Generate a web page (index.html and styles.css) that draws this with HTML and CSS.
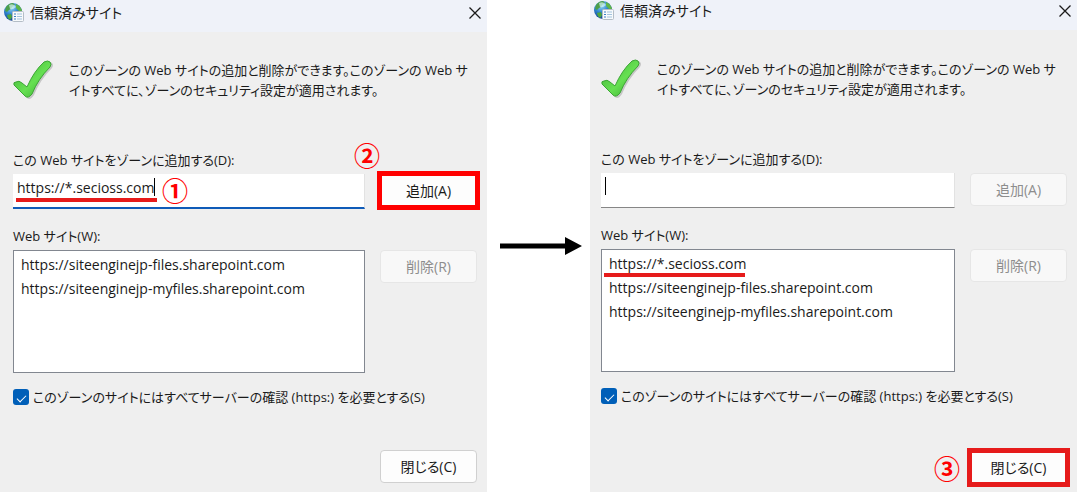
FILE: index.html
```
<!DOCTYPE html>
<html lang="ja">
<head>
    <meta charset="UTF-8">
    <meta name="viewport" content="width=device-width, initial-scale=1.0">
    <title>信頼済みサイト</title>
    <link rel="stylesheet" href="styles.css">
</head>
<body>
    <svg width="0" height="0" class="defs" aria-hidden="true">
        <defs>
            <radialGradient id="sea" cx="40%" cy="25%" r="75%">
                <stop offset="0" stop-color="#9fdcf7"/>
                <stop offset="0.5" stop-color="#2f86cf"/>
                <stop offset="1" stop-color="#123f92"/>
            </radialGradient>
            <linearGradient id="leaf" x1="0" y1="0" x2="1" y2="1">
                <stop offset="0" stop-color="#3fae35"/>
                <stop offset="0.55" stop-color="#66e052"/>
                <stop offset="1" stop-color="#35a52c"/>
            </linearGradient>
            <symbol id="globe" viewBox="0 0 20 20">
                <circle cx="9" cy="9" r="9" fill="url(#sea)"/>
                <path d="M2 4 Q5 0 9 0 L11 2 L8 4 L7 6 L5 7 L3 9 L1 8 Z" fill="#4d9f4a"/>
                <path d="M12 1 Q17 3 18 8 L15 8 L12 5 Z" fill="#5fb548"/>
                <path d="M3 12 L7 11 L8 14 L6 17 Q3 15 3 12 Z" fill="#4fa63d"/>
                <path d="M5 2 Q10 0 12 4 Q9 7 6 6 Z" fill="#d4f3f5" opacity="0.7"/>
                <rect x="8.500" y="8.500" width="11" height="10" rx="1" fill="#f7fafc" stroke="#b4bdc6"/>
                <path d="M10 11h2M10 13.500h2M10 16h2" stroke="#3c7fc4"/>
                <path d="M13 11h5M13 13.500h5M13 16h5" stroke="#a3c3de"/>
            </symbol>
            <symbol id="tick" viewBox="0 0 40 40">
                <path d="M2 25 Q1 22 4 22 Q7 21 9 23 L15 28 Q22 11 32 2 Q36 0 38 2 Q40 4 38 7 Q26 19 20 34 Q16 40 13 37 Z" fill="#8a8a8a" opacity="0.4" transform="translate(1 1)"/>
                <path d="M1 25 Q0 22 3 22 Q6 20 9 23 L14 27 Q21 11 31 2 Q35 0 37 2 Q39 4 37 7 Q25 19 19 34 Q15 39 12 36 Z" fill="url(#leaf)" stroke="#3ca535"/>
            </symbol>
            <symbol id="close" viewBox="0 0 12 12">
                <path d="M0.500 0.500 L11.500 11.500 M11.500 0.500 L0.500 11.500" stroke="#1b1b1b" stroke-width="1.300" fill="none"/>
            </symbol>
        </defs>
    </svg>

    <main class="steps">
        <section class="dialog">
            <header class="titlebar">
                <svg class="globe"><use href="#globe"/></svg>
                <h1>信頼済みサイト</h1>
                <button type="button" class="close" aria-label="閉じる"><svg><use href="#close"/></svg></button>
            </header>
            <form class="content">
                <div class="intro">
                    <svg class="tick"><use href="#tick"/></svg>
                    <p>このゾーンの Web サイトの追加と削除ができます。このゾーンの Web サ<br>イトすべてに、ゾーンのセキュリティ設定が適用されます。</p>
                </div>
                <label for="zone1">この Web サイトをゾーンに追加する(D):</label>
                <div class="row add-row">
                    <div class="field">
                        <input type="text" id="zone1" class="text active" value="https://*.secioss.com">
                        <span class="caret caret-end"></span>
                        <span class="underline"></span>
                        <span class="number one">①</span>
                    </div>
                    <div class="action">
                        <button type="button" class="button marked bright">追加(A)</button>
                        <span class="number two">②</span>
                    </div>
                </div>
                <label for="sites1">Web サイト(W):</label>
                <div class="row">
                    <div class="field">
                        <select id="sites1" class="list" size="5">
                            <option>https://siteenginejp-files.sharepoint.com</option>
                            <option>https://siteenginejp-myfiles.sharepoint.com</option>
                        </select>
                    </div>
                    <div class="action">
                        <button type="button" class="button" disabled>削除(R)</button>
                    </div>
                </div>
                <label class="check"><input type="checkbox" checked>このゾーンのサイトにはすべてサーバーの確認 (https:) を必要とする(S)</label>
                <footer class="footer">
                    <div class="action">
                        <button type="button" class="button">閉じる(C)</button>
                    </div>
                </footer>
            </form>
        </section>

        <svg class="arrow" viewBox="0 0 82 18" aria-hidden="true">
            <path d="M0 6.500h65V0l17 9l-17 9v-6.500H0z" fill="#000"/>
        </svg>

        <section class="dialog after">
            <header class="titlebar">
                <svg class="globe"><use href="#globe"/></svg>
                <h1>信頼済みサイト</h1>
                <button type="button" class="close" aria-label="閉じる"><svg><use href="#close"/></svg></button>
            </header>
            <form class="content">
                <div class="intro">
                    <svg class="tick"><use href="#tick"/></svg>
                    <p>このゾーンの Web サイトの追加と削除ができます。このゾーンの Web サ<br>イトすべてに、ゾーンのセキュリティ設定が適用されます。</p>
                </div>
                <label for="zone2">この Web サイトをゾーンに追加する(D):</label>
                <div class="row add-row">
                    <div class="field">
                        <input type="text" id="zone2" class="text">
                        <span class="caret"></span>
                    </div>
                    <div class="action">
                        <button type="button" class="button" disabled>追加(A)</button>
                    </div>
                </div>
                <label for="sites2">Web サイト(W):</label>
                <div class="row">
                    <div class="field">
                        <select id="sites2" class="list" size="5">
                            <option>https://*.secioss.com</option>
                            <option>https://siteenginejp-files.sharepoint.com</option>
                            <option>https://siteenginejp-myfiles.sharepoint.com</option>
                        </select>
                        <span class="underline"></span>
                    </div>
                    <div class="action">
                        <button type="button" class="button" disabled>削除(R)</button>
                    </div>
                </div>
                <label class="check"><input type="checkbox" checked>このゾーンのサイトにはすべてサーバーの確認 (https:) を必要とする(S)</label>
                <footer class="footer">
                    <div class="action">
                        <button type="button" class="button marked">閉じる(C)</button>
                        <span class="number three">③</span>
                    </div>
                </footer>
            </form>
        </section>
    </main>
</body>
</html>
```

FILE: styles.css
```
* {
    box-sizing: border-box;
}

body {
    margin: 0;
    background-color: #fff;
    color: #1a1a1a;
    font-family: "Open Sans", "Noto Sans CJK JP", sans-serif;
    font-size: 13px;
    line-height: 20px;
    font-feature-settings: "palt";
}

.defs {
    position: absolute;
}

button,
input,
select {
    font: inherit;
    font-size: 14px;
    font-feature-settings: inherit;
    color: inherit;
}

.steps {
    display: grid;
    grid-template-columns: minmax(0, 1fr) 103px minmax(0, 1fr);
    min-height: 100vh;
}

.dialog {
    display: flex;
    flex-direction: column;
    background-color: #efefef;
}

.titlebar {
    display: flex;
    align-items: center;
    height: 32px;
    padding: 0 6px 6px 4px;
    background-color: #eff2f9;
}

.globe {
    width: 20px;
    height: 20px;
}

h1 {
    flex: 1;
    margin: 0 0 0 6px;
    font-size: 14px;
    font-weight: normal;
}

.close {
    padding: 0;
    border: 0;
    background: none;
    line-height: 0;
}

.close svg {
    width: 12px;
    height: 12px;
}

.content {
    display: flex;
    flex: 1;
    flex-direction: column;
    padding: 28px 10px 9px 13px;
}

.intro {
    display: flex;
    gap: 16px;
    margin-bottom: 50px;
}

.tick {
    flex: none;
    width: 40px;
    height: 40px;
}

.intro p {
    margin: 0;
    white-space: nowrap;
}

.row {
    display: flex;
    gap: 15px;
    margin-top: 4px;
}

.add-row {
    margin-bottom: 17px;
}

.field {
    position: relative;
    flex: 1;
}

.text {
    display: block;
    width: 100%;
    height: 35px;
    padding: 0 4px 6px;
    border: 0;
    border-right: 1px solid #e2e2e2;
    border-bottom: 1px solid #868686;
    background-color: #fff;
}

.active {
    border-bottom: 2px solid #0f5bb8;
}

.text:focus,
.list:focus {
    outline: none;
}

.list {
    display: block;
    width: 100%;
    height: 123px;
    padding: 2px 0;
    border: 1px solid #828790;
    border-radius: 0;
    background-color: #fff;
    overflow: hidden;
}

.list option {
    padding: 2px 7px;
    line-height: 20px;
    min-height: 24px;
}

.action {
    position: relative;
    width: 97px;
}

.button {
    width: 100%;
    height: 33px;
    padding: 0;
    border: 1px solid #d0d0d0;
    border-radius: 4px;
    background-color: #fdfdfd;
}

.button:disabled {
    border-color: #e6e6e6;
    background-color: #f8f8f8;
    color: #8d8d8d;
}

.marked {
    border-color: #fdfdfd;
    border-radius: 0;
    outline: 5px solid #e61b1b;
    outline-offset: -2px;
}

.bright {
    outline-color: #f00;
}

.check {
    display: flex;
    align-items: center;
    gap: 4px;
    margin-top: 14px;
    white-space: nowrap;
}

.check input {
    display: grid;
    place-items: center;
    flex: none;
    appearance: none;
    width: 16px;
    height: 16px;
    margin: 0;
    border-radius: 3px;
    background-color: #005fb8;
}

.check input::before {
    content: "";
    width: 8px;
    height: 4px;
    border: solid #fff;
    border-width: 0 0 1px 1px;
    transform: rotate(-45deg);
}

.footer {
    display: flex;
    justify-content: flex-end;
    margin-top: auto;
}

/* callouts drawn over the dialogs */
.caret {
    position: absolute;
    top: 4px;
    left: 4px;
    width: 1px;
    height: 18px;
    background-color: #000;
}

.caret-end {
    left: 141px;
}

.underline {
    position: absolute;
    top: 24px;
    left: 3px;
    width: 141px;
    height: 4px;
    background-color: #e61b1b;
}

.number {
    position: absolute;
    color: #f00;
    font-family: "Noto Sans CJK JP", sans-serif;
    font-size: 26px;
    font-weight: bold;
    line-height: 26px;
}

.one {
    top: 3px;
    left: 149px;
}

.two {
    top: -32px;
    left: -26px;
}

.three {
    top: 4px;
    left: -36px;
}

.arrow {
    align-self: center;
    justify-self: end;
    width: 82px;
    height: 18px;
    margin-right: 8px;
}

.after .titlebar {
    height: 30px;
    padding-bottom: 8px;
}

.after .content {
    padding: 29px 10px 8px 11px;
}
```
